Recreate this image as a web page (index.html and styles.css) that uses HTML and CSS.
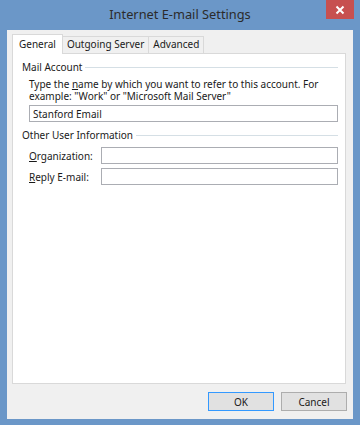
FILE: index.html
```html
<!DOCTYPE html>
<html lang="en">
<head>
  <meta charset="UTF-8">
  <title>Internet E-mail Settings</title>
  <link rel="stylesheet" href="styles.css">
</head>
<body>
  <div class="window">
    <div class="titlebar">
      <span class="title">Internet E-mail Settings</span>
      <button class="close" aria-label="Close">
        <svg width="10" height="10" viewBox="0 0 10 10"><path d="M1.5 1.5 L8.5 8.5 M8.5 1.5 L1.5 8.5" stroke="#fff" stroke-width="2"/></svg>
      </button>
    </div>

    <div class="client">
      <div class="tabs">
        <div class="tab active">General</div>
        <div class="tab">Outgoing Server</div>
        <div class="tab">Advanced</div>
      </div>

      <div class="panel">
        <div class="group-title"><span>Mail Account</span></div>
        <div class="indent">
          <p class="hint">Type the <u>n</u>ame by which you want to refer to this account. For example: "Work" or "Microsoft Mail Server"</p>
          <input class="field" type="text" value="Stanford Email">
        </div>

        <div class="group-title second"><span>Other User Information</span></div>
        <div class="indent">
          <div class="row">
            <label><u>O</u>rganization:</label>
            <input class="field" type="text">
          </div>
          <div class="row">
            <label><u>R</u>eply E-mail:</label>
            <input class="field" type="text">
          </div>
        </div>
      </div>

      <div class="buttons">
        <button class="btn default">OK</button>
        <button class="btn">Cancel</button>
      </div>
    </div>
  </div>
</body>
</html>
```

FILE: styles.css
```css
body {
  margin: 0;
  background-color: #6b97c8;
  font-family: 'Noto Sans', 'Open Sans', sans-serif;
  font-size: 10px;
  color: #1a1a1a;
}
.window {
  display: flex;
  flex-direction: column;
  height: 425px;
  width: 360px;
}
.titlebar {
  position: relative;
  height: 30px;
  display: flex;
  align-items: center;
  justify-content: center;
}
.title {
  font-size: 12.8px;
  color: #2b2b2b;
  margin-top: -3px;
}
.close {
  position: absolute;
  top: 0;
  right: 6px;
  width: 28px;
  height: 19px;
  border: none;
  padding: 0;
  background-color: #c75050;
  display: flex;
  align-items: center;
  justify-content: center;
}
.client {
  flex: 1;
  margin: 0 7px 6px 7px;
  background-color: #f0f0f0;
  display: flex;
  flex-direction: column;
  padding: 4px 7px 8px 5px;
}
.tabs {
  display: flex;
  align-items: flex-end;
  padding-left: 1px;
  height: 19px;
  position: relative;
  z-index: 1;
}
.tab {
  box-sizing: border-box;
  height: 17px;
  line-height: 15px;
  padding: 0 4px;
  border: 1px solid #d9d9d9;
  border-bottom: none;
  background-color: #f0f0f0;
  margin-left: -1px;
}
.tab.active {
  height: 20px;
  margin-bottom: -1px;
  background-color: #fff;
  padding: 0 6px;
  line-height: 18px;
}
.panel {
  flex: 1;
  background-color: #fff;
  border: 1px solid #d9d9d9;
  padding: 6px 7px 0 9px;
}
.group-title {
  display: flex;
  align-items: center;
  gap: 3px;
  line-height: 15px;
}
.group-title::after {
  content: "";
  flex: 1;
  border-top: 1px solid #d5dfe5;
}
.group-title.second {
  margin-top: 6px;
}
.indent {
  padding-left: 7px;
}
.hint {
  margin: 3px 0 3px 0;
  line-height: 12px;
}
.field {
  display: block;
  box-sizing: border-box;
  width: 100%;
  height: 17px;
  margin: 0;
  border: 1px solid #abadb3;
  padding: 0 3px;
  font-family: inherit;
  font-size: 10px;
  color: #1a1a1a;
  background-color: #fff;
  outline: none;
}
.row {
  display: flex;
  align-items: center;
  margin-top: 4px;
}
.row label {
  width: 72px;
  flex-shrink: 0;
}
.buttons {
  display: flex;
  justify-content: flex-end;
  gap: 7px;
  margin-top: 8px;
  margin-right: -1px;
}
.btn {
  width: 66px;
  height: 19px;
  border: 1px solid #adadad;
  background-color: #e1e1e1;
  font-family: inherit;
  font-size: 10px;
  color: #1a1a1a;
  padding: 0;
}
.btn.default {
  border-color: #3399ff;
}
```
